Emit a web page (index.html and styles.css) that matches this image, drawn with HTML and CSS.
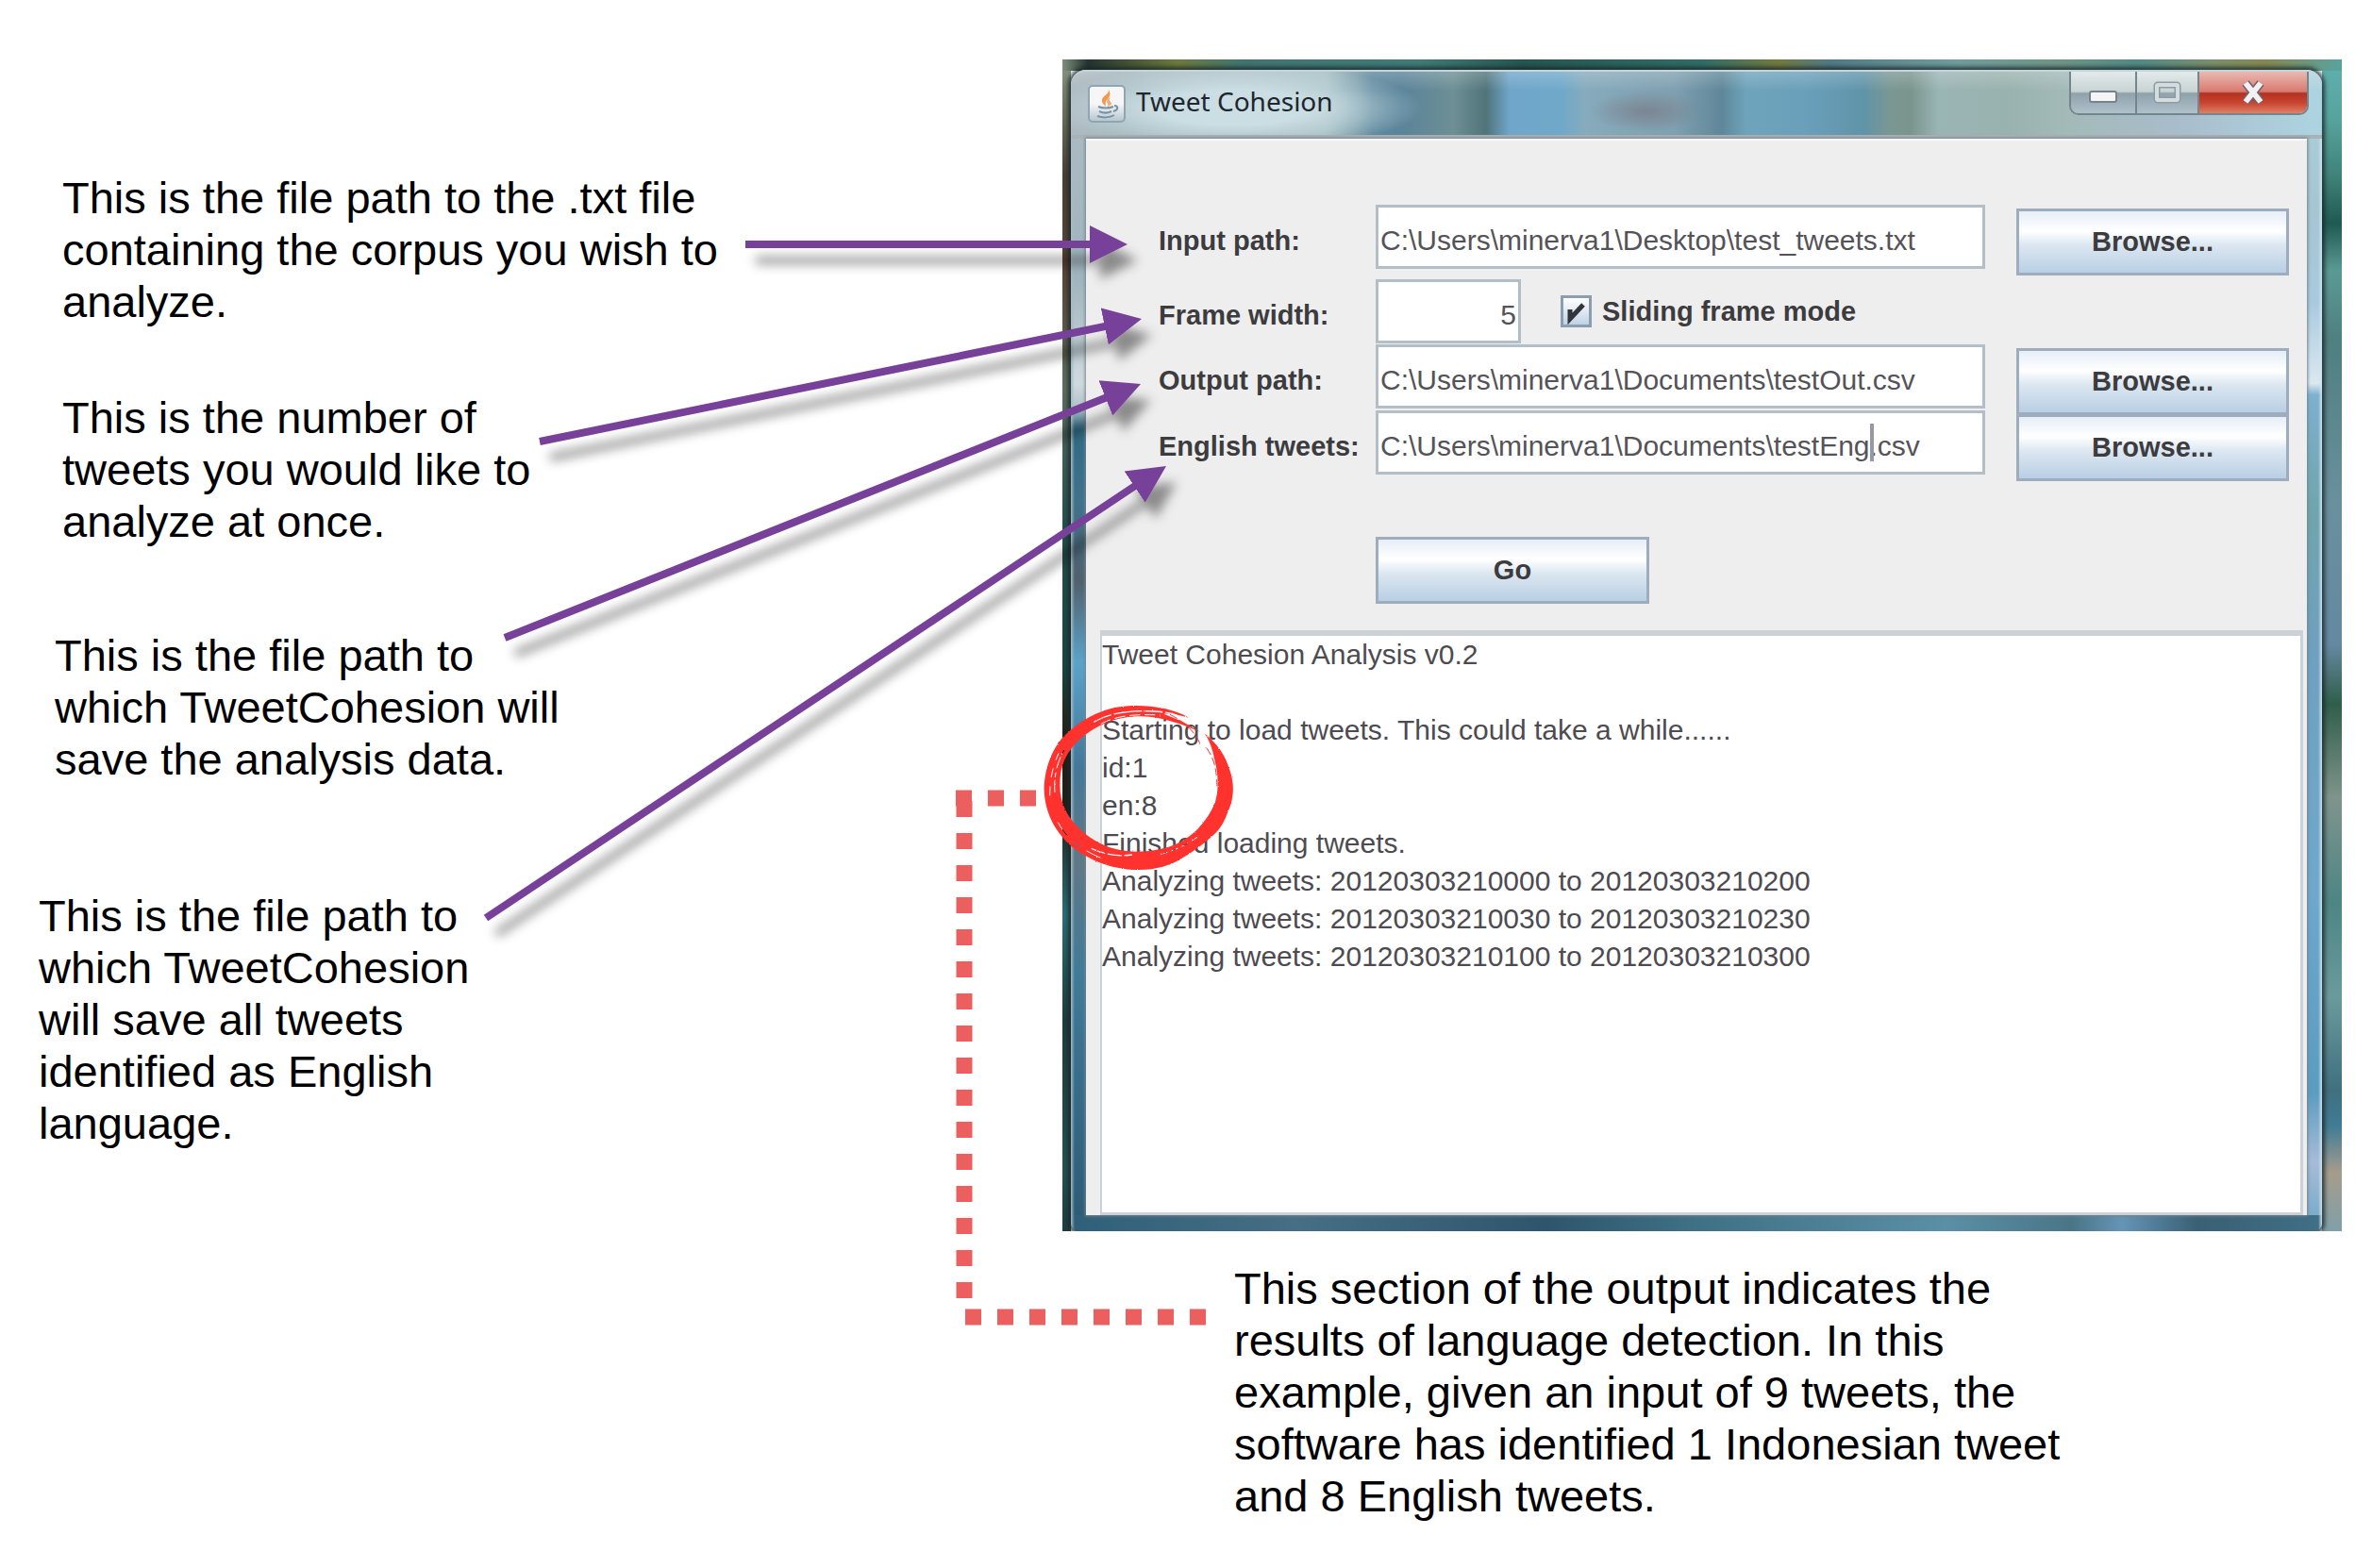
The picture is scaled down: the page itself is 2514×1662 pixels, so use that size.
FILE: index.html
```html
<!DOCTYPE html>
<html lang="en">
<head>
<meta charset="utf-8">
<title>Tweet Cohesion guide</title>
<link rel="stylesheet" href="styles.css">
</head>
<body>
<main class="guide">
  <div class="notes">
    <p class="note note-input">This is the file path to the .txt file containing the corpus you wish to analyze.</p>
    <p class="note note-frame">This is the number of tweets you would like to analyze at once.</p>
    <p class="note note-output">This is the file path to which TweetCohesion will save the analysis data.</p>
    <p class="note note-english">This is the file path to which TweetCohesion will save all tweets identified as English language.</p>
  </div>

  <div class="stage">
    <div class="desktop">
      <section class="window" aria-label="Tweet Cohesion">
        <header class="titlebar">
          <div class="title">
            <svg class="app-icon" viewBox="0 0 40 40" aria-hidden="true">
              <defs><linearGradient id="tile" x2="0" y2="1"><stop offset="0.5" stop-color="#f6f6f7"/><stop offset="1" stop-color="#b4c4d0"/></linearGradient></defs>
              <rect x="1" y="1" width="38" height="38" rx="4" fill="url(#tile)" stroke="#8fa5b2" stroke-width="2"/>
              <path d="M22 5c1 5-8 7-7 12 0 3 3 4 4 6 0-3-1-5 1-7 3-3 5-6 2-11z" fill="#ee9a55"/>
              <path d="M24 13c-4 2-5 4-3 7 1 2 0 3-1 4 5-3 6-4 4-6-2-2-1-3 0-5z" fill="#f0ac70"/>
              <path d="M11 23c4 2 12 2 16 0M12 28c4 2 9 2 13 0M10 33c5 2 13 2 18-1M28 22c5 0 4 5-1 6" fill="none" stroke="#7892a5" stroke-width="2"/>
            </svg>
            <h1>Tweet Cohesion</h1>
          </div>
          <div class="controls">
            <button class="control" type="button" aria-label="Minimize">
              <svg width="30" height="16" viewBox="0 0 30 16"><rect x="1" y="3" width="28" height="11" rx="2" fill="#f5f5f5" stroke="#77838c" stroke-width="2"/></svg>
            </button>
            <button class="control" type="button" aria-label="Maximize">
              <svg width="30" height="24" viewBox="0 0 30 24"><rect x="4" y="4" width="22" height="16" rx="1" fill="none" stroke="#8d9ca3" stroke-width="7"/><rect x="4" y="4" width="22" height="16" rx="1" fill="none" stroke="#d3dddf" stroke-width="4"/></svg>
            </button>
            <button class="control control-close" type="button" aria-label="Close">
              <svg width="30" height="26" viewBox="0 0 30 26"><path d="M7 3l16 20M23 3L7 23" stroke="#72616a" stroke-width="9"/><path d="M7 3l16 20M23 3L7 23" stroke="#f1f1f3" stroke-width="6"/></svg>
            </button>
          </div>
        </header>

        <div class="client">
          <form class="form">
            <label for="input-path">Input path:</label>
            <input class="field" id="input-path" type="text" value="C:\Users\minerva1\Desktop\test_tweets.txt" spellcheck="false">
            <button class="button" type="button">Browse...</button>

            <label for="frame-width">Frame width:</label>
            <div class="frame-row">
              <input class="field field-number" id="frame-width" type="text" value="5">
              <label class="check"><input type="checkbox" checked>Sliding frame mode</label>
            </div>

            <label for="output-path">Output path:</label>
            <input class="field" id="output-path" type="text" value="C:\Users\minerva1\Documents\testOut.csv" spellcheck="false">
            <button class="button" type="button">Browse...</button>

            <label for="english-tweets">English tweets:</label>
            <div class="caret-field">
              <input class="field" id="english-tweets" type="text" value="C:\Users\minerva1\Documents\testEng.csv" spellcheck="false">
              <span class="caret"></span>
            </div>
            <button class="button" type="button">Browse...</button>

            <button class="button button-go" type="button">Go</button>
          </form>
          <textarea class="log" aria-label="Analysis log" readonly spellcheck="false">Tweet Cohesion Analysis v0.2

Starting to load tweets. This could take a while......
id:1
en:8
Finished loading tweets.
Analyzing tweets: 20120303210000 to 20120303210200
Analyzing tweets: 20120303210030 to 20120303210230
Analyzing tweets: 20120303210100 to 20120303210300</textarea>
        </div>
      </section>
    </div>
    <p class="note note-detection">This section of the output indicates the results of language detection. In this example, given an input of 9 tweets, the software has identified 1 Indonesian tweet and 8 English tweets.</p>
  </div>

  <svg class="marks" width="2514" height="1662" viewBox="0 0 2514 1662" aria-hidden="true">
    <defs>
      <marker id="head" markerUnits="userSpaceOnUse" markerWidth="42" markerHeight="42" refX="40" refY="21" orient="auto"><path d="M0 1L40 21L0 41z" fill="#774199"/></marker>
      <filter id="shade" filterUnits="userSpaceOnUse" x="480" y="200" width="820" height="840"><feDropShadow dx="11" dy="17" stdDeviation="6" flood-color="#000" flood-opacity="0.42"/></filter>
      <filter id="rough" x="-5%" y="-5%" width="110%" height="110%"><feTurbulence type="fractalNoise" baseFrequency="0.3" numOctaves="2" seed="4"/><feDisplacementMap in="SourceGraphic" scale="6" xChannelSelector="R" yChannelSelector="G"/></filter>
      <mask id="scratches" maskUnits="userSpaceOnUse" x="0" y="0" width="660" height="580">
        <rect width="660" height="580" fill="#fff"/>
        <g fill="none" stroke="#000" stroke-width="3">
          <path d="M178 76C230 45 300 38 370 42S450 58 480 76" stroke-width="4" stroke-dasharray="60 9 90 5"/>
          <path d="M200 82C250 55 310 50 390 54" stroke-dasharray="34 14"/>
          <path d="M54 300C50 250 60 200 90 155" stroke-dasharray="40 8 16 12"/>
          <path d="M38 310C38 260 46 220 66 175" stroke-dasharray="30 28"/>
          <path d="M64 395C90 445 140 485 210 512" stroke-dasharray="50 30 30 20"/>
          <path d="M170 478C220 500 260 504 300 498" stroke-width="4" stroke-dasharray="46 8"/>
          <path d="M390 496C440 484 480 462 510 440" stroke-dasharray="22 14"/>
        </g>
      </mask>
    </defs>
    <g filter="url(#shade)" stroke="#774199" stroke-width="8" fill="none">
      <path d="M790 259H1160"/><path d="M1155 259H1195" marker-end="url(#head)" stroke="none"/>
      <path d="M572 468L1176 345"/><path d="M572 468L1210 338" marker-end="url(#head)" stroke="none"/>
      <path d="M535 676L1176 420"/><path d="M535 676L1209 407" marker-end="url(#head)" stroke="none"/>
      <path d="M515 973L1206 513"/><path d="M515 973L1236 494" marker-end="url(#head)" stroke="none"/>
    </g>
    <g stroke="#eb5f5e" stroke-width="17" stroke-dasharray="17 17" fill="none">
      <path d="M1013 846H1100"/>
      <path d="M1022 849V1378"/>
      <path d="M1023 1396H1279"/>
    </g>
    <g transform="translate(1100 740) scale(0.3333)" filter="url(#rough)">
      <g mask="url(#scratches)" fill="#ff312e">
        <path d="M530 112C572 146 596 184 608 222C622 260 626 300 612 342C600 372 592 400 568 426C536 456 500 486 460 508C420 534 370 548 310 546C240 544 170 520 110 474C60 430 22 370 20 290C20 230 44 160 84 120C130 72 200 36 260 28C330 18 420 28 480 62C440 52 420 48 400 50L455 72L518 108C460 84 400 60 330 58C260 58 210 78 168 104C120 134 84 180 74 230C66 280 70 320 88 356C114 408 170 456 240 478C300 496 380 488 430 468C490 444 540 392 564 330C576 290 574 240 562 196C556 162 544 132 530 112Z"/>
      </g>
      <path d="M536 158C560 190 568 225 570 280M420 52C460 72 500 104 518 150" stroke="#ff312e" stroke-width="3" fill="none" stroke-dasharray="26 10"/>
    </g>
  </svg>
</main>
</body>
</html>
```
FILE: styles.css
```css
* {
  box-sizing: border-box;
}

body {
  margin: 0;
  background: #fff;
  color: #000;
  font-family: "Liberation Sans", Arial, sans-serif;
}

.guide {
  position: relative;
  display: grid;
  grid-template-columns: 1126px minmax(1100px, 1fr);
  padding-bottom: 48px;
}

/* Callout texts */
.notes {
  padding-top: 182px;
}

.note {
  margin: 0;
  font-size: 47px;
  line-height: 55px;
}

.note-input {
  margin-left: 66px;
  width: 705px;
}

.note-frame {
  margin: 68px 0 0 66px;
  width: 510px;
}

.note-output {
  margin: 87px 0 0 58px;
  width: 550px;
}

.note-english {
  margin: 111px 0 0 41px;
  width: 490px;
}

.note-detection {
  margin: 33px 0 0 182px;
  width: 900px;
}

/* Desktop behind the window */
.stage {
  padding: 63px 32px 0 0;
}

.desktop {
  padding: 11px 21px 0 9px;
  overflow: hidden;
  background:
    linear-gradient(90deg, #7f8f7c, #23332f 2%, #6d7a3c 9%, #3f7571 14%, #3f7b77 28%, #245650 36%, #2f6d68 50%, #737a3c 56%, #4f7a86 60%, #6f9d9d 70%, #6d9584 78%, #4f8a86 84%, #7a8f6a 90%, #868850 94%, #57a3a0) top / 100% 12px no-repeat,
    linear-gradient(180deg, #5fb0b0, #57a49e 5%, #3f8278 10%, #1f5a52 14%, #5a9a94 18%, #4f7f80 24%, #6a909e 38%, #6488a0 50%, #305e4a 55%, #7f948c 63%, #4d8585 72%, #6b9a9c 80%, #406f80 88%, #3f7c95 91%, #a69c8c 95%, #7fa0a8) right / 21px 100% no-repeat,
    linear-gradient(180deg, #879986, #4a3f35 10%, #5a4436 18%, #5d6e5f 28%, #24504c 40%, #1b4540 52%, #241f16 58%, #20201a 64%, #2b7077 73%, #1f3c3a 82%, #24524f 95%, #1d3b40) left / 9px 100% no-repeat;
}

.window {
  display: flex;
  flex-direction: column;
  padding: 0 16px 17px;
  border-radius: 16px 16px 8px 8px;
  background:
    linear-gradient(90deg, #a3bac4, rgba(163, 186, 196, 0) 4px) left / 4px 100% no-repeat,
    linear-gradient(270deg, #d0e4ec, rgba(208, 228, 236, 0) 4px) right / 4px 100% no-repeat,
    linear-gradient(90deg, #2f6079, #466e84 18%, #2e556b 38%, #3f7186 50%, #5a8fa5 70%, #4a7587 80%, #6594b5 84%, #3a6074 90%, #406f87) bottom / 100% 17px no-repeat,
    linear-gradient(180deg, #b0bcc4, #9fb5be 18%, #cfdadf 27%, #b4c4ca 29%, #2f6a85 31%, #3f738c 37%, #50616c 44%, #5aa3cb 51%, #42789a 60%, #5f7986 68%, #3f7b99 78%, #2c5a75) left / 18px 100% no-repeat,
    linear-gradient(180deg, #add3e0, #a5c5d2 12%, #a9c9df 20%, #dbe8f0 27%, #7eb0d0 28%, #6fa5ad 38%, #6fa0c0 50%, #6fa8cb 70%, #5b9cc1 88%, #a6bbd8 94%, #6fa8c8) right / 18px 100% no-repeat,
    #7fa5b5;
  box-shadow: 0 0 4px 3px rgba(25, 36, 40, 0.8);
}

.titlebar {
  display: flex;
  justify-content: space-between;
  align-items: flex-start;
  height: 73px;
  margin: 0 -16px;
  padding: 0 14px 0 18px;
  border-top: 2px solid #c3d4da;
  border-bottom: 4px solid #a9b2b6;
  border-radius: 16px 16px 0 0;
  background:
    linear-gradient(180deg, rgba(255, 255, 255, 0.2), rgba(255, 255, 255, 0) 30%),
    radial-gradient(200px 46px at 172px 38px, #cbdee4 40%, rgba(200, 220, 226, 0)),
    radial-gradient(60px 22px at 610px 42px, #7b8592, rgba(123, 133, 146, 0)),
    linear-gradient(90deg, #adb9c1, #9fb3b8 60px, #9db8bc 270px, #5d879d 320px, #5a849a 350px, #6d8f95 405px, #50747a 440px, #6fa6c9 465px, #70a8ca 520px, #86abbc 545px, #7fa0b0 640px, #5f8799 690px, #6ea4bb 716px, #6a9fba 780px, #6094a9 840px, #7a9792 868px, #7a958d 890px, #9ab5b5 920px, #98b2ae 990px, #a3bab9 1060px, #a9bccb 1170px, #add3e0 1315px);
}

.title {
  display: flex;
  align-items: flex-start;
  gap: 11px;
  padding-top: 14px;
}

.app-icon {
  width: 40px;
  height: 40px;
}

.title h1 {
  margin: 0;
  color: #20262c;
  font: 400 28px/34px "Noto Sans", "Open Sans", sans-serif;
}

.controls {
  display: flex;
  height: 46px;
  overflow: hidden;
  border: 2px solid #74858c;
  border-top: 0;
  border-radius: 0 0 10px 10px;
}

.control {
  display: flex;
  justify-content: center;
  align-items: center;
  width: 66px;
  padding: 0;
  border: 0;
  border-right: 2px solid #74858c;
  background: linear-gradient(180deg, #e3eaeb, #c8d3d3 48%, #8fa2ab 52%, #afc2cc);
}

.control:first-child {
  width: 70px;
  padding-top: 8px;
}

.control-close {
  width: 114px;
  border-right: 0;
  background: linear-gradient(180deg, #e9b9b1, #d97a6f 48%, #b23120 52%, #c94430 75%, #dd8169);
}

/* Client area */
.client {
  display: flex;
  flex-direction: column;
  border-top: 2px solid #fafafa;
  background: #eee;
  box-shadow: 0 0 3px 1px #76838b;
}

.form {
  display: grid;
  grid-template-columns: 230px 1fr 289px;
  grid-template-rows: 79px 69px 70px 134px 72px;
  align-items: start;
  padding: 68px 19px 27px 77px;
}

.form label {
  padding-top: 8px;
  color: #3c3c3f;
  font-size: 29px;
  font-weight: 700;
  line-height: 60px;
  white-space: nowrap;
}

.field {
  display: block;
  width: calc(100% - 33px);
  height: 68px;
  margin: 0;
  padding: 7px 2px 0;
  border: 3px solid #b4bec7;
  border-radius: 0;
  background: #fff;
  color: #55535a;
  font: 400 30px "Liberation Sans", Arial, sans-serif;
  outline: 0;
}

.frame-row {
  display: flex;
  grid-column: 2 / 4;
  gap: 42px;
}

.field-number {
  width: 154px;
  text-align: right;
}

.form .check {
  display: flex;
  align-items: center;
  gap: 11px;
  height: 68px;
  padding-top: 0;
}

.check input {
  appearance: none;
  width: 33px;
  height: 34px;
  margin: 0;
  border: 3px solid #8b9dae;
  background:
    url("data:image/svg+xml,%3Csvg xmlns='http://www.w3.org/2000/svg' viewBox='0 0 27 28'%3E%3Cpath d='M7 12v10L21 7' fill='none' stroke='%2332353a' stroke-width='5'/%3E%3C/svg%3E"),
    linear-gradient(180deg, #fff, #bfd3e6);
}

.caret-field {
  position: relative;
}

.caret {
  position: absolute;
  top: 14px;
  left: 524px;
  width: 4px;
  height: 40px;
  background: #96999d;
}

.button {
  height: 71px;
  margin: 4px 0 0;
  padding: 0;
  border: 3px solid #9dadbd;
  border-radius: 0;
  background: linear-gradient(180deg, #e6eef6, #fff 32%, #dce7f1 55%, #b9cfe4);
  color: #3c3c3f;
  font: 700 29px "Liberation Sans", Arial, sans-serif;
}

.button-go {
  grid-column: 2;
  width: 290px;
  margin: 0;
}

.log {
  display: block;
  height: 620px;
  margin: 0 4px 0 15px;
  padding: 0;
  border: solid #ccd1d8;
  border-width: 6px 3px 3px 2px;
  outline: 0;
  resize: none;
  overflow: hidden;
  background: #fff;
  color: #4d4b51;
  font: 400 30px/40px "Liberation Sans", Arial, sans-serif;
  white-space: pre;
}

/* Arrows, dotted leader and brushed ring drawn over the page */
.marks {
  position: absolute;
  top: 0;
  left: 0;
  pointer-events: none;
}
```
